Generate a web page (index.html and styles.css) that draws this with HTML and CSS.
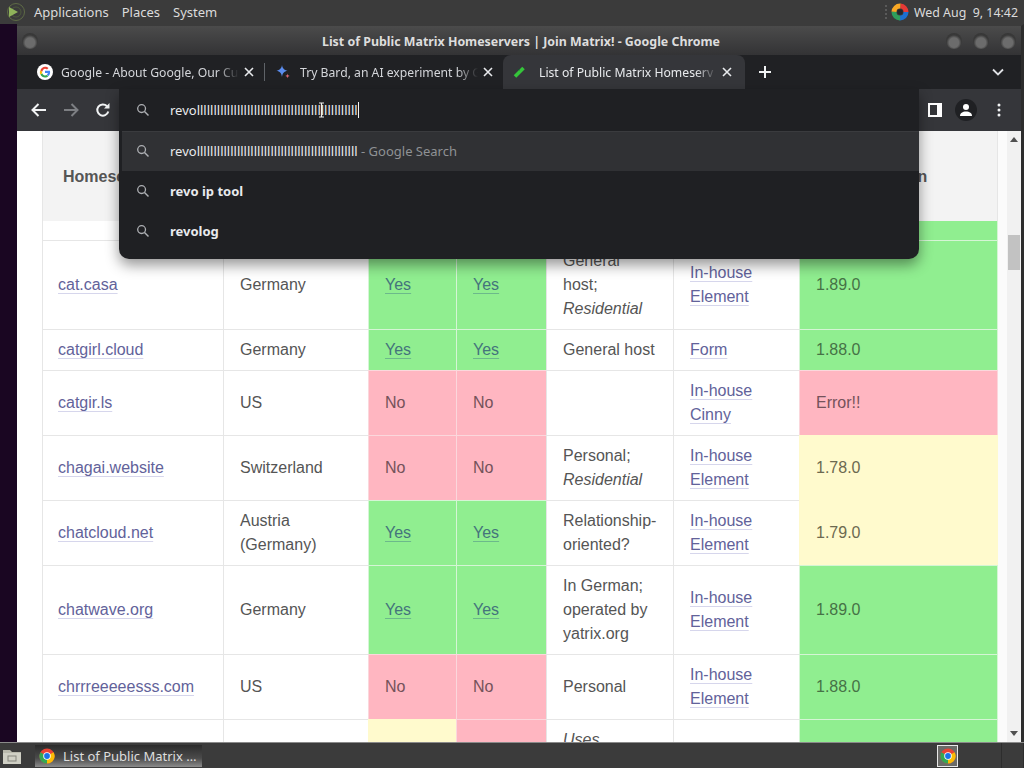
FILE: index.html
```html
<!DOCTYPE html>
<html lang="en">
<head>
<meta charset="utf-8">
<title>List of Public Matrix Homeservers</title>
<link rel="stylesheet" href="styles.css">
</head>
<body>
<svg class="defs" width="0" height="0" aria-hidden="true">
  <symbol id="search" viewBox="0 0 14 14"><circle cx="5.6" cy="5.6" r="3.9" fill="none" stroke="currentColor" stroke-width="1.3"/><path d="M8.5 8.5l4 4" stroke="currentColor" stroke-width="1.5" fill="none"/></symbol>
  <symbol id="chrome" viewBox="0 0 20 20"><circle cx="10" cy="10" r="9.5" fill="#ea4335"/><path d="M10 10L1.8 5.2A9.5 9.5 0 0 0 10 19.5z" fill="#34a853"/><path d="M10 10v9.5A9.5 9.5 0 0 0 18.2 5.2z" fill="#fbbc05"/><circle cx="10" cy="10" r="4.7" fill="#fff"/><circle cx="10" cy="10" r="3.6" fill="#1a73e8"/></symbol>
  <symbol id="close" viewBox="0 0 10 10"><path d="M1 1l8 8M9 1l-8 8" stroke="currentColor" stroke-width="1.6" fill="none"/></symbol>
</svg>

<header class="panel">
  <svg class="distro" width="26" height="20" viewBox="0 0 26 20"><circle cx="14" cy="10" r="8.5" fill="none" stroke="#5e6b46" stroke-width="1"/><circle cx="14" cy="10" r="5" fill="none" stroke="#4d5a3c" stroke-width="1"/><path d="M7 5l9 5-9 5z" fill="#8fb35a"/></svg>
  <nav class="panel-menu"><span>Applications</span><span>Places</span><span>System</span></nav>
  <div class="tray">
    <span class="tray-dots"></span>
    <svg width="18" height="18" viewBox="0 0 18 18"><circle cx="9" cy="9" r="6" fill="none" stroke="#1c6fd0" stroke-width="5" stroke-dasharray="9.5 28"/><circle cx="9" cy="9" r="6" fill="none" stroke="#e53935" stroke-width="5" stroke-dasharray="9.5 28" stroke-dashoffset="9.5"/><circle cx="9" cy="9" r="6" fill="none" stroke="#f9a825" stroke-width="5" stroke-dasharray="9.5 28" stroke-dashoffset="19"/><circle cx="9" cy="9" r="6" fill="none" stroke="#2e9e5b" stroke-width="5" stroke-dasharray="9.5 28" stroke-dashoffset="28.5"/><circle cx="9" cy="9" r="2.8" fill="#26262a"/></svg>
    <time>Wed Aug  9, 14:42</time>
  </div>
</header>

<div class="desktop">
  <main class="window">
    <div class="titlebar">
      <span class="wbtn"></span>
      <h1>List of Public Matrix Homeservers | Join Matrix! - Google Chrome</h1>
      <span class="wbtns"><span class="wbtn"></span><span class="wbtn"></span><span class="wbtn"></span></span>
    </div>

    <div class="tabstrip">
      <div class="tab first">
        <svg class="fav" width="16" height="16" viewBox="0 0 16 16"><circle cx="8" cy="8" r="8" fill="#fff"/><path d="M12.9 6.8H8v2.2h2.9c-.2.8-.6 1.3-1.2 1.7l1.7 1.4c1-.9 1.7-2.3 1.7-3.9 0-.5-.1-1-.2-1.4z" fill="#4285f4"/><path d="M8 13.600c1.400 0 2.600-.5 3.400-1.300l-1.700-1.400c-.4.3-1 .5-1.700.5-1.300 0-2.400-.9-2.800-2.100L3.400 10.600c.9 1.800 2.700 3 4.600 3z" fill="#34a853"/><path d="M5.200 9.300C5 8.800 5 8.200 5.200 7.700L3.400 6.300c-.7 1.400-.7 3 0 4.300z" fill="#fbbc05"/><path d="M8 4.800c.8 0 1.400.3 2 .8l1.500-1.500C10.600 3.200 9.400 2.700 8 2.700c-2 0-3.700 1.200-4.600 3.600l1.800 1.400C5.600 6.500 6.700 4.800 8 4.800z" fill="#ea4335"/></svg>
        <span class="tab-title">Google - About Google, Our Cu</span>
        <svg class="x" width="10" height="10"><use href="#close"/></svg>
      </div>
      <span class="tab-sep"></span>
      <div class="tab second">
        <svg class="fav" width="16" height="16" viewBox="0 0 16 16"><path d="M7 1c.5 3.4 2 5 5.600 5.800C9 7.600 7.500 9.300 7 13 6.500 9.300 5 7.600 1.400 6.800 5 6 6.500 4.400 7 1z" fill="#5b8def"/><path d="M12.500 9.500c.2 1.500.8 2.100 2.200 2.400-1.400.3-2 .9-2.200 2.400-.2-1.500-.8-2.100-2.200-2.400 1.400-.3 2-.9 2.200-2.400z" fill="#d96570"/></svg>
        <span class="tab-title">Try Bard, an AI experiment by G</span>
        <svg class="x" width="10" height="10"><use href="#close"/></svg>
      </div>
      <div class="tab active">
        <svg class="fav" width="14" height="14" viewBox="0 0 14 14"><path d="M2 11.500L10.500 3" stroke="#35c53a" stroke-width="3.500" fill="none"/><path d="M5 4l1.500 1" stroke="#153" stroke-width="1"/></svg>
        <span class="tab-title">List of Public Matrix Homeserv</span>
        <svg class="x" width="10" height="10"><use href="#close"/></svg>
      </div>
      <svg class="plus" width="14" height="14" viewBox="0 0 14 14"><path d="M7 1v12M1 7h12" stroke="#f1f3f4" stroke-width="2" fill="none"/></svg>
      <svg class="chev" width="12" height="8" viewBox="0 0 12 8"><path d="M1 1.500l5 5 5-5" stroke="#dfe1e5" stroke-width="1.800" fill="none"/></svg>
    </div>

    <div class="toolbar">
      <div class="nav">
        <svg width="18" height="16" viewBox="0 0 18 16"><path d="M16 8H3M8.500 2L2.500 8l6 6" stroke="#f1f3f4" stroke-width="2" fill="none"/></svg>
        <svg width="18" height="16" viewBox="0 0 18 16"><path d="M2 8h13M9.500 2l6 6-6 6" stroke="#7d7f83" stroke-width="2" fill="none"/></svg>
        <svg class="reload" width="16" height="16" viewBox="0 0 16 16"><path d="M13.300 9.500A5.600 5.600 0 1 1 12 4.200" stroke="#f1f3f4" stroke-width="2" fill="none"/><path d="M14.500 1v5.500H9z" fill="#f1f3f4"/></svg>
      </div>
      <div class="actions">
        <svg width="14" height="14" viewBox="0 0 14 14"><rect width="14" height="14" fill="#fff"/><rect x="2" y="2" width="7" height="10" fill="#35363a"/></svg>
        <span class="avatar"><svg width="14" height="14" viewBox="0 0 14 14"><circle cx="7" cy="4" r="3" fill="#fff"/><path d="M1 13c0-3 2.500-4.500 6-4.500s6 1.500 6 4.500z" fill="#fff"/></svg></span>
        <svg class="dots" width="4" height="14" viewBox="0 0 4 14"><circle cx="2" cy="2" r="1.500" fill="#f1f3f4"/><circle cx="2" cy="7" r="1.500" fill="#f1f3f4"/><circle cx="2" cy="12" r="1.500" fill="#f1f3f4"/></svg>
      </div>
    </div>

    <div class="viewport">
      <div class="page">
        <table class="servers">
          <colgroup><col class="c1"><col class="c2"><col class="c3"><col class="c4"><col class="c5"><col class="c6"><col class="c7"></colgroup>
          <thead>
            <tr><th class="h-first">Homeserver</th><th></th><th></th><th></th><th></th><th></th><th class="h-last">Server version</th></tr>
          </thead>
          <tbody>
            <tr class="stub"><td></td><td></td><td></td><td></td><td></td><td></td><td class="yes"></td></tr>
            <tr><td><a href="#">cat.casa</a></td><td>Germany</td><td class="yes"><a href="#">Yes</a></td><td class="yes"><a href="#">Yes</a></td><td>General host; <em>Residential</em></td><td><a href="#">In-house Element</a></td><td class="yes">1.89.0</td></tr>
            <tr><td><a href="#">catgirl.cloud</a></td><td>Germany</td><td class="yes"><a href="#">Yes</a></td><td class="yes"><a href="#">Yes</a></td><td>General host</td><td><a href="#">Form</a></td><td class="yes">1.88.0</td></tr>
            <tr><td><a href="#">catgir.ls</a></td><td>US</td><td class="no">No</td><td class="no">No</td><td></td><td><a href="#">In-house Cinny</a></td><td class="no">Error!!</td></tr>
            <tr><td><a href="#">chagai.website</a></td><td>Switzerland</td><td class="no">No</td><td class="no">No</td><td>Personal; <em>Residential</em></td><td><a href="#">In-house Element</a></td><td class="warn">1.78.0</td></tr>
            <tr><td><a href="#">chatcloud.net</a></td><td>Austria (Germany)</td><td class="yes"><a href="#">Yes</a></td><td class="yes"><a href="#">Yes</a></td><td>Relationship-oriented?</td><td><a href="#">In-house Element</a></td><td class="warn">1.79.0</td></tr>
            <tr><td><a href="#">chatwave.org</a></td><td>Germany</td><td class="yes"><a href="#">Yes</a></td><td class="yes"><a href="#">Yes</a></td><td>In German; operated by yatrix.org</td><td><a href="#">In-house Element</a></td><td class="yes">1.89.0</td></tr>
            <tr><td><a href="#">chrrreeeeesss.com</a></td><td>US</td><td class="no">No</td><td class="no">No</td><td>Personal</td><td><a href="#">In-house Element</a></td><td class="yes">1.88.0</td></tr>
            <tr class="cut"><td></td><td></td><td class="warn"></td><td class="no"></td><td class="top"><em>Uses</em></td><td></td><td class="yes"></td></tr>
          </tbody>
        </table>
      </div>
      <div class="scrollbar">
        <span class="arrow up"></span>
        <span class="thumb"></span>
        <span class="arrow down"></span>
      </div>
    </div>

    <div class="omnibox">
      <div class="omni-row input">
        <svg class="mag" width="14" height="14"><use href="#search"/></svg>
        <span class="omni-text">revollllllllllllllllllllllllllllllllllllllllllllllll<i class="caret"></i></span>
        <svg class="ibeam" width="7" height="16" viewBox="0 0 7 16"><path d="M1 1h5M1 15h5M3.500 1v14" stroke="#eee" stroke-width="1.200" fill="none"/></svg>
      </div>
      <div class="omni-row hover">
        <svg class="mag" width="14" height="14"><use href="#search"/></svg>
        <span class="omni-text">revollllllllllllllllllllllllllllllllllllllllllllllll <span class="dim">- Google Search</span></span>
      </div>
      <div class="omni-row">
        <svg class="mag" width="14" height="14"><use href="#search"/></svg>
        <b class="omni-text">revo ip tool</b>
      </div>
      <div class="omni-row">
        <svg class="mag" width="14" height="14"><use href="#search"/></svg>
        <b class="omni-text">revolog</b>
      </div>
    </div>
  </main>
</div>

<footer class="taskbar">
  <svg class="showdesk" width="20" height="18" viewBox="0 0 20 18"><path d="M1 3h7l2 2h9v12H1z" fill="#b9b9ad"/><rect x="1" y="6" width="18" height="11" fill="#cfcfc4"/><rect x="6" y="9" width="8" height="5" fill="none" stroke="#85857c"/></svg>
  <div class="task">
    <svg width="16" height="16"><use href="#chrome"/></svg>
    <span>List of Public Matrix …</span>
  </div>
  <div class="pager">
    <span class="pager-cell current"><svg width="16" height="16"><use href="#chrome"/></svg></span>
    <span class="pager-cell"></span>
    <span class="pager-cell"></span>
  </div>
</footer>
</body>
</html>
```

FILE: styles.css
```css
* { box-sizing: border-box; }
html, body { margin: 0; height: 100%; }
body {
  width: 1024px;
  height: 768px;
  overflow: hidden;
  display: flex;
  flex-direction: column;
  background: #1a0622;
  font-family: "Noto Sans", sans-serif;
}
.defs { position: absolute; }

.panel {
  height: 24px;
  flex: none;
  display: flex;
  align-items: center;
  padding: 0 6px 0 4px;
  background: #3b3b3b;
  color: #dcdcdc;
  font-size: 13px;
}
.distro { margin-right: 6px; margin-left: -2px; }
.panel-menu { display: flex; gap: 14px; }
.panel-menu span:nth-child(3) { margin-left: -1px; }
.panel-menu span:nth-child(2) { margin-left: -1px; }
.tray { margin-left: auto; display: flex; align-items: center; gap: 5px; }
.tray time { white-space: pre; font-size: 12.4px; }
.tray-dots {
  width: 2px;
  height: 14px;
  margin-right: -1px;
  background: repeating-linear-gradient(#5a5a5a 0 2px, transparent 2px 4px);
}

.desktop { flex: 1; min-height: 0; padding-left: 17px; display: flex; }
.window {
  position: relative;
  flex: 1;
  display: flex;
  flex-direction: column;
  min-width: 0;
  border-right: 3px solid #2d2d2d;
  border-top: 2px solid #3b3b3b;
}

.titlebar {
  height: 29px;
  flex: none;
  display: flex;
  align-items: center;
  justify-content: space-between;
  padding: 0 5px 0 5px;
  background: linear-gradient(#4b4b4b, #333335);
}
.titlebar h1 {
  margin: 0;
  flex: 1;
  text-align: center;
  font-size: 12.4px;
  font-weight: 700;
  color: #dddddd;
  padding: 1px 0 0 58px;
}
.wbtns { display: flex; gap: 11px; }
.wbtn {
  display: block;
  width: 16px;
  height: 16px;
  border-radius: 50%;
  background: radial-gradient(circle at 50% 60%, #6c6c6c 0 38%, #3a3a3a 60%, #2f2f2f 100%);
}

.tabstrip {
  height: 34px;
  flex: none;
  display: flex;
  align-items: center;
  background: #202124;
  position: relative;
}
.tab {
  height: 34px;
  display: flex;
  align-items: center;
  font-size: 12.2px;
  color: #d4d6da;
  white-space: nowrap;
}
.tab-title {
  display: block;
  overflow: hidden;
  -webkit-mask-image: linear-gradient(to right, #000 88%, transparent);
  mask-image: linear-gradient(to right, #000 88%, transparent);
}
.x { margin-left: 5px; color: #e8eaed; flex: none; }
.fav { flex: none; }
.tab.first { width: 247px; padding-left: 20px; }
.tab.first .tab-title { width: 178px; margin-left: 8px; }
.tab-sep { width: 1px; height: 18px; background: #5f6368; flex: none; }
.tab.second { width: 238px; padding-left: 10px; }
.tab.second .tab-title { width: 178px; margin-left: 9px; }
.tab.active {
  width: 242px;
  padding-left: 10px;
  color: #e8eaed;
  background: #35363a;
  border-radius: 8px 8px 0 0;
}
.tab.active .tab-title { width: 178px; margin-left: 12px; }
.plus { margin-left: 13px; }
.chev { margin-left: auto; margin-right: 17px; }

.toolbar {
  height: 42px;
  flex: none;
  display: flex;
  align-items: center;
  justify-content: space-between;
  background: #35363a;
  padding: 0 20px 0 13px;
}
.nav { display: flex; align-items: center; gap: 14px; }
.reload { margin-left: 1px; }
.actions { display: flex; align-items: center; gap: 13px; }
.dots { margin-left: 7px; }
.avatar {
  width: 22px;
  height: 22px;
  border-radius: 50%;
  background: #1f2023;
  display: flex;
  align-items: center;
  justify-content: center;
}

.viewport { flex: 1; min-height: 0; display: flex; background: #fff; overflow: hidden; }
.page { flex: 1; min-width: 0; padding-left: 25px; }
.servers {
  table-layout: fixed;
  width: 956px;
  border-collapse: separate;
  border-spacing: 0;
  font: 16px/24px "Liberation Sans", Arial, sans-serif;
  color: #555555;
}
.c1 { width: 181px; }
.c2 { width: 145px; }
.c3 { width: 88px; }
.c4 { width: 90px; }
.c5 { width: 127px; }
.c6 { width: 126px; }
.c7 { width: 199px; }
.servers th, .servers td {
  border-left: 1px solid #e6e6e6;
  border-top: 1px solid #e6e6e6;
  padding: 8px 15px 8px 16px;
  vertical-align: middle;
  text-align: left;
}
.servers td:first-child { padding-left: 15px; }
.servers td:last-child, .servers th:last-child { border-right: 1px solid #e6e6e6; }
.servers th {
  height: 90px;
  background: #f3f3f3;
  font-weight: 700;
  border-top: 0;
  border-left-color: #f3f3f3;
  padding: 10px 15px 8px 20px;
}
.servers td:first-child, .servers th:first-child { border-left-color: #e6e6e6; }
.servers th.h-last { white-space: nowrap; border-left-color: #f3f3f3; padding-left: 16px; }
.servers a {
  color: #62629a;
  text-decoration: underline;
  text-decoration-color: #d6d6ec;
  text-underline-offset: 3px;
}
.servers em { display: block; }
.stub td { height: 19px; padding: 0; }
.stub td { border-top: 0; }
.cut td { height: 89px; }
.servers td.top { vertical-align: top; }

.servers td.yes { background: #90ee90; color: #467246; border-color: #d5f5d5; }
.servers td.yes a { color: #44747c; text-decoration-color: #6cb98b; }
.servers td.no { background: #ffb6c1; color: #74525a; border-color: #fbd7dc; }
.servers td.warn { background: #fffacd; color: #6c6950; border-color: #fffacd; }

.scrollbar {
  width: 14px;
  margin-left: 9px;
  flex: none;
  position: relative;
  background: #f1f1f1;
  box-shadow: -9px 0 0 #fbfbfb;
}
.thumb {
  position: absolute;
  top: 104px;
  left: 1px;
  width: 12px;
  height: 35px;
  background: #c2c2c2;
}
.arrow {
  position: absolute;
  left: 3px;
  width: 0;
  height: 0;
  border-left: 4px solid transparent;
  border-right: 4px solid transparent;
}
.arrow.up { top: 6px; border-bottom: 5px solid #505050; }
.arrow.down { bottom: 6px; border-top: 5px solid #505050; }

.omnibox {
  position: absolute;
  left: 102px;
  top: 63px;
  width: 800px;
  height: 170px;
  background: #1f2023;
  border-radius: 0 0 10px 10px;
  box-shadow: 0 6px 14px rgba(0, 0, 0, .42);
  color: #e8eaed;
  font-size: 13px;
}
.omni-row {
  position: relative;
  height: 40px;
  display: flex;
  align-items: center;
  padding-left: 17px;
}
.omni-row.input { height: 42px; }
.omni-row.hover { background: #303134; margin-left: 3px; padding-left: 14px; box-shadow: inset 0 1px 0 #3a3b3e; }
.mag { color: #aeb0b4; flex: none; margin-right: 20px; }
.omni-text { white-space: nowrap; }
.caret { display: inline-block; width: 1px; height: 16px; background: #f1f3f4; vertical-align: -3px; }
.dim { color: #8f9195; }
.ibeam { position: absolute; left: 199px; top: 13px; }

.taskbar {
  height: 26px;
  flex: none;
  position: relative;
  display: flex;
  align-items: flex-end;
  background: #3b3b3b;
  border-top: 1px solid #8a8a8a;
  color: #dedede;
  font-size: 13px;
}
.showdesk { align-self: center; margin-left: 2px; margin-right: 13px; }
.task {
  width: 167px;
  height: 22px;
  display: flex;
  align-items: center;
  gap: 8px;
  padding-left: 4px;
  margin-bottom: 1px;
  background: linear-gradient(#2b2b2b, #4b4b4b 60%, #8c8c8c);
  white-space: nowrap;
}
.pager { margin-left: auto; display: flex; height: 100%; }
.pager-cell {
  width: 22px;
  height: 100%;
  border-right: 1px solid #2d2d2d;
  display: flex;
  align-items: center;
  justify-content: center;
}
.pager-cell.current {
  background: #6b6b68;
  border: 1px solid #e8e8e8;
  width: 21px;
  height: 22px;
  margin: 2px 22px 0 0;
}
```
